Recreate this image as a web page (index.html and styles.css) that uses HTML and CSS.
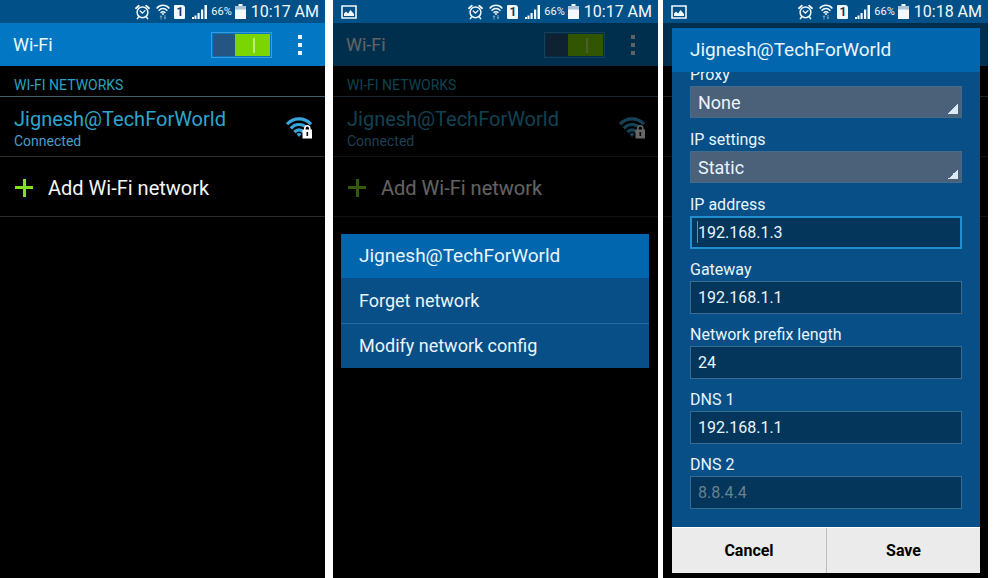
FILE: index.html
```html
<!DOCTYPE html>
<html lang="en">
<head>
<meta charset="utf-8">
<meta name="viewport" content="width=device-width, initial-scale=1">
<title>Wi-Fi settings</title>
<link rel="stylesheet" href="styles.css">
</head>
<body>
<svg class="sprite" aria-hidden="true">
  <symbol id="alarm" viewBox="0 0 15 16">
    <g fill="none" stroke="currentColor" stroke-linecap="round">
      <circle cx="7.5" cy="8.3" r="5.4" stroke-width="1.5"/>
      <path d="M1 4.2 3.8 1.8M14 4.2 11.2 1.8" stroke-width="1.8"/>
      <path d="M3.6 12.8 2.4 14.6M11.4 12.8 12.6 14.6" stroke-width="1.5"/>
      <path d="M5.2 7 7.4 9.2 10 6.6" stroke-width="1.3"/>
    </g>
  </symbol>
  <symbol id="wifi" viewBox="0 0 14 16">
    <g fill="none" stroke="currentColor" stroke-width="1.5">
      <path d="M.6 4.400C4.200.3 9.800.3 13.400 4.400"/>
      <path d="M2.600 6.700C5.200 3.900 8.800 3.900 11.400 6.700"/>
      <path d="M4.600 8.900C6.100 7.300 7.900 7.300 9.400 8.900"/>
    </g>
    <circle cx="7" cy="10" r="1" fill="currentColor"/>
    <path d="M3.500 13 5 11 6.500 13zM4.500 13h1v2.500h-1zM7.500 13.500 9 15.500 10.500 13.500zM8.500 11h1v2.500h-1z" fill="currentColor" opacity=".5"/>
  </symbol>
  <symbol id="signal" viewBox="0 0 15 14">
    <path d="M0 12h2v2H0zM2.500 10.500h2V14h-2zM5.500 8h2.200v6H5.500zM9 4.500h2.200V14H9zM12.500 0H15v14h-2.500z" fill="currentColor"/>
  </symbol>
  <symbol id="battery" viewBox="0 0 11 15">
    <path d="M3.500 0h4v2h-4z" fill="currentColor"/>
    <path d="M0 2h11v4H0z" fill="#a9c2d5"/>
    <path d="M0 5.500h11V15H0z" fill="currentColor"/>
  </symbol>
  <symbol id="image" viewBox="0 0 16 14">
    <path d="M1 1h14v12H1z" fill="none" stroke="currentColor" stroke-width="1.600"/>
    <path d="M3 11V8.500L5 6.500 7 8.500 9.500 5 13 9v2z" fill="currentColor"/>
  </symbol>
  <symbol id="wifi-lock" viewBox="0 0 27 22">
    <g fill="none" stroke="#38a5dc" stroke-width="3.200">
      <path d="M1 7.200C7.500 0 18.500 0 25 7.200"/>
      <path d="M4.800 11.400C9.500 6.200 16.500 6.200 21.200 11.400"/>
      <path d="M8.400 15.200C11.200 12.200 14.800 12.200 17.600 15.200"/>
    </g>
    <path d="M10.500 17Q13 15.200 15.500 17L13 20z" fill="#38a5dc"/>
    <path d="M17 11.500Q21.300 5.500 25.500 11.500V13H17z" fill="#000"/>
    <path d="M18.800 13V11.500a2.500 2.800 0 0 1 5 0V13" fill="none" stroke="#fff" stroke-width="1.600"/>
    <path d="M16.500 12.500h9.500V21.500h-9.500z" fill="#fff"/>
    <path d="M20.500 15h1.600v4h-1.600z" fill="#111"/>
  </symbol>
</svg>

<main class="phones">
  <section class="phone">
    <div class="status">
      <svg class="i-alarm"><use href="#alarm"/></svg>
      <svg class="i-wifi"><use href="#wifi"/></svg>
      <span class="sim">1</span>
      <svg class="i-signal"><use href="#signal"/></svg>
      <span class="percent">66%</span>
      <svg class="i-battery"><use href="#battery"/></svg>
      <time class="clock">10:17 AM</time>
    </div>
    <div class="screen">
      <header class="bar">
        <h1 class="bar-title"><label for="wifi-a">Wi-Fi</label></h1>
        <input class="switch" id="wifi-a" type="checkbox" role="switch" checked>
        <button class="more" type="button" aria-label="More options"><i></i><i></i><i></i></button>
      </header>
      <h2 class="section">WI-FI NETWORKS</h2>
      <button class="row network" type="button">
        <span class="names"><span class="ssid">Jignesh@TechForWorld</span><span class="state">Connected</span></span>
        <svg class="i-lock"><use href="#wifi-lock"/></svg>
      </button>
      <button class="row add" type="button"><span class="plus"></span>Add Wi-Fi network</button>
    </div>
  </section>

  <section class="phone second">
    <div class="status">
      <svg class="i-image"><use href="#image"/></svg>
      <svg class="i-alarm"><use href="#alarm"/></svg>
      <svg class="i-wifi"><use href="#wifi"/></svg>
      <span class="sim">1</span>
      <svg class="i-signal"><use href="#signal"/></svg>
      <span class="percent">66%</span>
      <svg class="i-battery"><use href="#battery"/></svg>
      <time class="clock">10:17 AM</time>
    </div>
    <div class="screen">
      <header class="bar">
        <h1 class="bar-title"><label for="wifi-b">Wi-Fi</label></h1>
        <input class="switch" id="wifi-b" type="checkbox" role="switch" checked>
        <button class="more" type="button" aria-label="More options"><i></i><i></i><i></i></button>
      </header>
      <h2 class="section">WI-FI NETWORKS</h2>
      <button class="row network" type="button">
        <span class="names"><span class="ssid">Jignesh@TechForWorld</span><span class="state">Connected</span></span>
        <svg class="i-lock"><use href="#wifi-lock"/></svg>
      </button>
      <button class="row add" type="button"><span class="plus"></span>Add Wi-Fi network</button>
      <div class="shade">
        <div class="dialog" role="dialog" aria-labelledby="menu-title">
          <h2 class="dialog-title" id="menu-title">Jignesh@TechForWorld</h2>
          <button class="item" type="button">Forget network</button>
          <button class="item" type="button">Modify network config</button>
        </div>
      </div>
    </div>
  </section>

  <section class="phone third">
    <div class="status">
      <svg class="i-image"><use href="#image"/></svg>
      <svg class="i-alarm"><use href="#alarm"/></svg>
      <svg class="i-wifi"><use href="#wifi"/></svg>
      <span class="sim">1</span>
      <svg class="i-signal"><use href="#signal"/></svg>
      <span class="percent">66%</span>
      <svg class="i-battery"><use href="#battery"/></svg>
      <time class="clock">10:18 AM</time>
    </div>
    <div class="screen tall">
      <div class="backdrop">
        <div class="bar"></div>
        <div class="section"></div>
        <div class="row"></div>
        <div class="row"></div>
      </div>
      <div class="shade">
        <form class="dialog" role="dialog" aria-labelledby="form-title">
          <h2 class="dialog-title" id="form-title">Jignesh@TechForWorld</h2>
          <div class="scroll">
            <div class="fields">
              <div class="field"><label for="proxy">Proxy</label>
                <select id="proxy"><option>None</option><option>Manual</option></select></div>
              <div class="field"><label for="ip-mode">IP settings</label>
                <select id="ip-mode"><option>Static</option><option>DHCP</option></select></div>
              <div class="field"><label for="ip">IP address</label>
                <input class="active" id="ip" type="text" value="192.168.1.3"></div>
              <div class="field"><label for="gateway">Gateway</label>
                <input id="gateway" type="text" value="192.168.1.1"></div>
              <div class="field"><label for="prefix">Network prefix length</label>
                <input id="prefix" type="text" value="24"></div>
              <div class="field"><label for="dns1">DNS 1</label>
                <input id="dns1" type="text" value="192.168.1.1"></div>
              <div class="field"><label for="dns2">DNS 2</label>
                <input id="dns2" type="text" placeholder="8.8.4.4"></div>
            </div>
          </div>
          <div class="actions">
            <button type="button">Cancel</button>
            <button type="button">Save</button>
          </div>
        </form>
      </div>
    </div>
  </section>
</main>
</body>
</html>
```
FILE: styles.css
```css
* { box-sizing: border-box; }

body {
  margin: 0;
  background: #fff;
  font-family: Roboto, "Noto Sans", sans-serif;
}

h1, h2 { margin: 0; font-weight: 400; }

button, input, select { font-family: inherit; margin: 0; }

button { border: 0; cursor: pointer; }

.sprite { display: none; }

.phones {
  display: flex;
  min-height: 100vh;
  padding-right: 12px;
}

.phone {
  flex: 1;
  min-width: 0;
  display: flex;
  flex-direction: column;
  background: #000;
}

.second { margin-left: 8px; }
.third { margin-left: 5px; }

/* Status bar */
.status {
  display: flex;
  align-items: center;
  justify-content: flex-end;
  height: 23px;
  padding: 0 6px 0 8px;
  background: #025088;
  color: #f2f8fc;
}

.status svg { flex: none; }

.i-image { width: 16px; height: 14px; margin-right: auto; }
.i-alarm { width: 15px; height: 16px; margin-right: 6px; }
.i-wifi { width: 14px; height: 16px; margin-right: 4px; }
.i-signal { width: 15px; height: 14px; margin-right: 4px; }
.i-battery { width: 11px; height: 15px; margin-right: 5px; }

.sim {
  width: 11px;
  height: 14px;
  margin-right: 7px;
  border-radius: 1px 3px 1px 1px;
  background: #f2f8fc;
  color: #123a5c;
  font-size: 12px;
  font-weight: 700;
  line-height: 14px;
  text-align: center;
}

.percent { margin-right: 3px; font-size: 11px; }

.clock { font-size: 16px; line-height: 23px; white-space: nowrap; }

/* Wi-Fi screen */
.screen {
  position: relative;
  flex: 1;
  display: flex;
  flex-direction: column;
}

.bar {
  display: flex;
  align-items: center;
  height: 43px;
  padding: 0 17px 0 13px;
  background: #0277c3;
  color: #eef7fd;
}

.bar-title { flex: 1; font-size: 18px; }

.switch {
  appearance: none;
  width: 61px;
  height: 26px;
  margin-right: 20px;
  padding: 1px;
  border: 1px solid #3d9ad8;
  background:
    linear-gradient(#b9ee72, #b9ee72) 40px 4px / 2px 15px no-repeat content-box,
    linear-gradient(90deg, #245583 22px, #7bd500 22px) content-box;
}

.more {
  display: grid;
  gap: 4px;
  width: 16px;
  padding: 0;
  justify-items: center;
  background: none;
}

.more i { width: 4px; height: 4px; background: #eef7fd; }

.section {
  height: 31px;
  padding: 4px 14px 0;
  border-bottom: 1px solid #42606b;
  color: #26a3c2;
  font-size: 14px;
  line-height: 31px;
}

.row {
  display: flex;
  align-items: center;
  width: 100%;
  height: 60px;
  padding: 2px 12px 0 14px;
  border-bottom: 1px solid #2c2c2c;
  background: none;
  color: #f5f5f5;
  text-align: left;
}

.names { flex: 1; display: grid; }

.ssid { color: #2fa5cb; font-size: 20px; line-height: 26px; }
.state { color: #4a9cc8; font-size: 14px; line-height: 18px; }

.i-lock { width: 27px; height: 22px; }

.add { gap: 14px; font-size: 20px; }

.plus {
  width: 20px;
  height: 20px;
  background:
    linear-gradient(#84e01c, #84e01c) center / 18px 3px no-repeat,
    linear-gradient(#84e01c, #84e01c) center / 3px 18px no-repeat;
}

/* Dialogs */
.shade {
  position: absolute;
  inset: 0;
  display: flex;
  align-items: center;
  padding: 0 9px 0 8px;
  background: rgba(0, 0, 0, 0.6);
}

.tall { display: grid; }
.backdrop, .tall .shade { grid-area: 1 / 1; }
.tall .shade { position: relative; padding: 0 8px 0 9px; }

.dialog { flex: 1; min-width: 0; background: #074f86; color: #e8f5fd; }

.dialog-title {
  padding: 0 18px;
  background: #0266ae;
  font-size: 19px;
  line-height: 44px;
}

.item {
  display: block;
  width: 100%;
  height: 45px;
  padding: 0 18px;
  background: #074f86;
  color: #e8f5fd;
  font-size: 18px;
  text-align: left;
}

.item + .item { border-top: 1px solid #2a6b9e; }

.scroll { overflow: hidden; padding: 0 18px 18px; }

.fields { display: grid; gap: 11px; margin-top: -7px; }

.field {
  display: grid;
  grid-template-rows: 21px 33px;
  align-items: start;
}

.field label { font-size: 16px; line-height: 20px; }

.field input,
.field select {
  width: 100%;
  height: 33px;
  padding: 0 7px;
  border: 1px solid #3a6c92;
  border-radius: 0;
  outline: 0;
  background: #04355b;
  color: #e8f5fd;
  font-size: 16px;
}

.field input::placeholder { color: #69808f; }

.field .active {
  padding: 0 6px;
  border: 2px solid #1f8fd0;
  background: linear-gradient(#4d92c4, #4d92c4) 5px 3px / 1px 22px no-repeat #04355b;
}

.field select {
  appearance: none;
  height: 32px;
  border: 1px solid #456b8b;
  background: linear-gradient(135deg, transparent 50%, #dbe8f5 50%) right 3px bottom 3px / 10px 10px no-repeat #4b6079;
  font-size: 18px;
}

.actions {
  display: grid;
  grid-template-columns: 1fr 1fr;
  height: 46px;
  border-top: 1px solid #fff;
  background: #ebebeb;
}

.actions button {
  background: none;
  color: #000;
  font-size: 16px;
  font-weight: 700;
}

.actions button + button { border-left: 1px solid #bdbdbd; }
```
